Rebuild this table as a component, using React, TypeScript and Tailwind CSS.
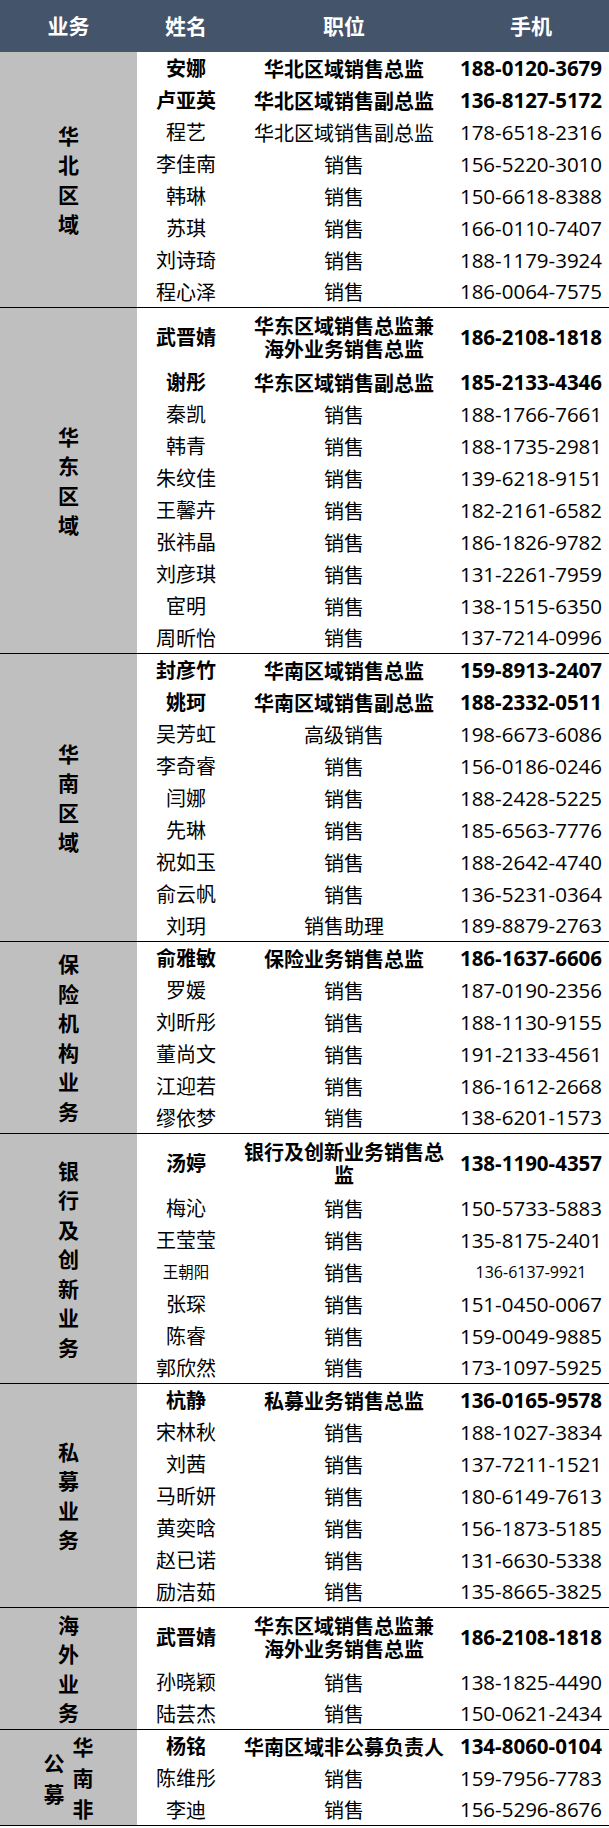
import clsx from "clsx";

interface ContactRow {
    name: string;
    title: string[];
    phone: string;
    bold?: boolean;
    small?: boolean;
}

interface Section {
    label: string[];
    rows: ContactRow[];
}

const sales = (name: string, phone: string): ContactRow => ({ name, title: ["销售"], phone });

const sections: Section[] = [
    {
        label: ["华北区域"],
        rows: [
            { name: "安娜", title: ["华北区域销售总监"], phone: "188-0120-3679", bold: true },
            { name: "卢亚英", title: ["华北区域销售副总监"], phone: "136-8127-5172", bold: true },
            { name: "程艺", title: ["华北区域销售副总监"], phone: "178-6518-2316" },
            sales("李佳南", "156-5220-3010"),
            sales("韩琳", "150-6618-8388"),
            sales("苏琪", "166-0110-7407"),
            sales("刘诗琦", "188-1179-3924"),
            sales("程心泽", "186-0064-7575"),
        ],
    },
    {
        label: ["华东区域"],
        rows: [
            { name: "武晋婧", title: ["华东区域销售总监兼", "海外业务销售总监"], phone: "186-2108-1818", bold: true },
            { name: "谢彤", title: ["华东区域销售副总监"], phone: "185-2133-4346", bold: true },
            sales("秦凯", "188-1766-7661"),
            sales("韩青", "188-1735-2981"),
            sales("朱纹佳", "139-6218-9151"),
            sales("王馨卉", "182-2161-6582"),
            sales("张祎晶", "186-1826-9782"),
            sales("刘彦琪", "131-2261-7959"),
            sales("宦明", "138-1515-6350"),
            sales("周昕怡", "137-7214-0996"),
        ],
    },
    {
        label: ["华南区域"],
        rows: [
            { name: "封彦竹", title: ["华南区域销售总监"], phone: "159-8913-2407", bold: true },
            { name: "姚珂", title: ["华南区域销售副总监"], phone: "188-2332-0511", bold: true },
            { name: "吴芳虹", title: ["高级销售"], phone: "198-6673-6086" },
            sales("李奇睿", "156-0186-0246"),
            sales("闫娜", "188-2428-5225"),
            sales("先琳", "185-6563-7776"),
            sales("祝如玉", "188-2642-4740"),
            sales("俞云帆", "136-5231-0364"),
            { name: "刘玥", title: ["销售助理"], phone: "189-8879-2763" },
        ],
    },
    {
        label: ["保险机构业务"],
        rows: [
            { name: "俞雅敏", title: ["保险业务销售总监"], phone: "186-1637-6606", bold: true },
            sales("罗媛", "187-0190-2356"),
            sales("刘昕彤", "188-1130-9155"),
            sales("董尚文", "191-2133-4561"),
            sales("江迎若", "186-1612-2668"),
            sales("缪依梦", "138-6201-1573"),
        ],
    },
    {
        label: ["银行及创新业务"],
        rows: [
            { name: "汤婷", title: ["银行及创新业务销售总监"], phone: "138-1190-4357", bold: true },
            sales("梅沁", "150-5733-5883"),
            sales("王莹莹", "135-8175-2401"),
            { name: "王朝阳", title: ["销售"], phone: "136-6137-9921", small: true },
            sales("张琛", "151-0450-0067"),
            sales("陈睿", "159-0049-9885"),
            sales("郭欣然", "173-1097-5925"),
        ],
    },
    {
        label: ["私募业务"],
        rows: [
            { name: "杭静", title: ["私募业务销售总监"], phone: "136-0165-9578", bold: true },
            sales("宋林秋", "188-1027-3834"),
            sales("刘茜", "137-7211-1521"),
            sales("马昕妍", "180-6149-7613"),
            sales("黄奕晗", "156-1873-5185"),
            sales("赵已诺", "131-6630-5338"),
            sales("励洁茹", "135-8665-3825"),
        ],
    },
    {
        label: ["海外业务"],
        rows: [
            { name: "武晋婧", title: ["华东区域销售总监兼", "海外业务销售总监"], phone: "186-2108-1818", bold: true },
            sales("孙晓颖", "138-1825-4490"),
            sales("陆芸杰", "150-0621-2434"),
        ],
    },
    {
        label: ["华南非", "公募"],
        rows: [
            { name: "杨铭", title: ["华南区域非公募负责人"], phone: "134-8060-0104", bold: true },
            sales("陈维彤", "159-7956-7783"),
            sales("李迪", "156-5296-8676"),
        ],
    },
];

const cjk = "font-['Noto_Sans_CJK_SC',sans-serif]";
const digits = "font-['Open_Sans','Noto_Sans_CJK_SC',sans-serif]";

export default function App() {
    return (
        <div className="w-[609px] bg-white text-black">
            <div className={clsx("flex h-[52px] items-center bg-[#44546a] text-[21px] font-bold text-white", cjk)}>
                <div className="w-[137px] text-center">业务</div>
                <div className="w-[98px] text-center">姓名</div>
                <div className="w-[218px] text-center">职位</div>
                <div className="flex-1 text-center">手机</div>
            </div>
            {sections.map((section) => (
                <SectionBlock key={section.label.join("")} section={section} />
            ))}
        </div>
    );
}

function SectionBlock({ section }: { section: Section }) {
    const lastColumn = section.label.length > 1;

    return (
        <div className="flex border-b border-black">
            <div className={clsx("flex w-[137px] shrink-0 flex-row-reverse items-center justify-center gap-[8px] bg-[#bfbfbf] text-[21px] font-bold", cjk)}>
                {section.label.map((column) => (
                    <div key={column} className="flex flex-col items-center">
                        {column.split("").map((char, index) => (
                            <span
                                key={`${char}-${index}`}
                                className={clsx("flex items-center leading-none", lastColumn ? "h-[31px]" : "h-[29.5px]")}
                            >
                                {char}
                            </span>
                        ))}
                    </div>
                ))}
            </div>
            <div className="flex min-w-0 flex-1 flex-col">
                {section.rows.map((row) => (
                    <RowLine key={row.name + row.phone} row={row} />
                ))}
            </div>
        </div>
    );
}

function RowLine({ row }: { row: ContactRow }) {
    const tall = row.title.length > 1 || row.title[0].length > 10;

    return (
        <div
            className={clsx(
                "flex items-center",
                tall ? "h-[58px]" : "h-8 last:h-[31px]",
                row.bold && "font-bold"
            )}
        >
            <div className={clsx("w-[98px] shrink-0 text-center", cjk, row.small ? "text-[15.5px]" : "text-[20px]")}>
                {row.name}
            </div>
            <div className={clsx("w-[218px] shrink-0 text-center text-[20px] leading-[23px]", cjk)}>
                {row.title.map((line) => (
                    <div key={line}>{line}</div>
                ))}
            </div>
            <div className={clsx("w-[156px] shrink-0 whitespace-nowrap text-center", digits, row.small ? "text-[16px]" : "text-[20.5px]")}>
                {row.phone}
            </div>
        </div>
    );
}
